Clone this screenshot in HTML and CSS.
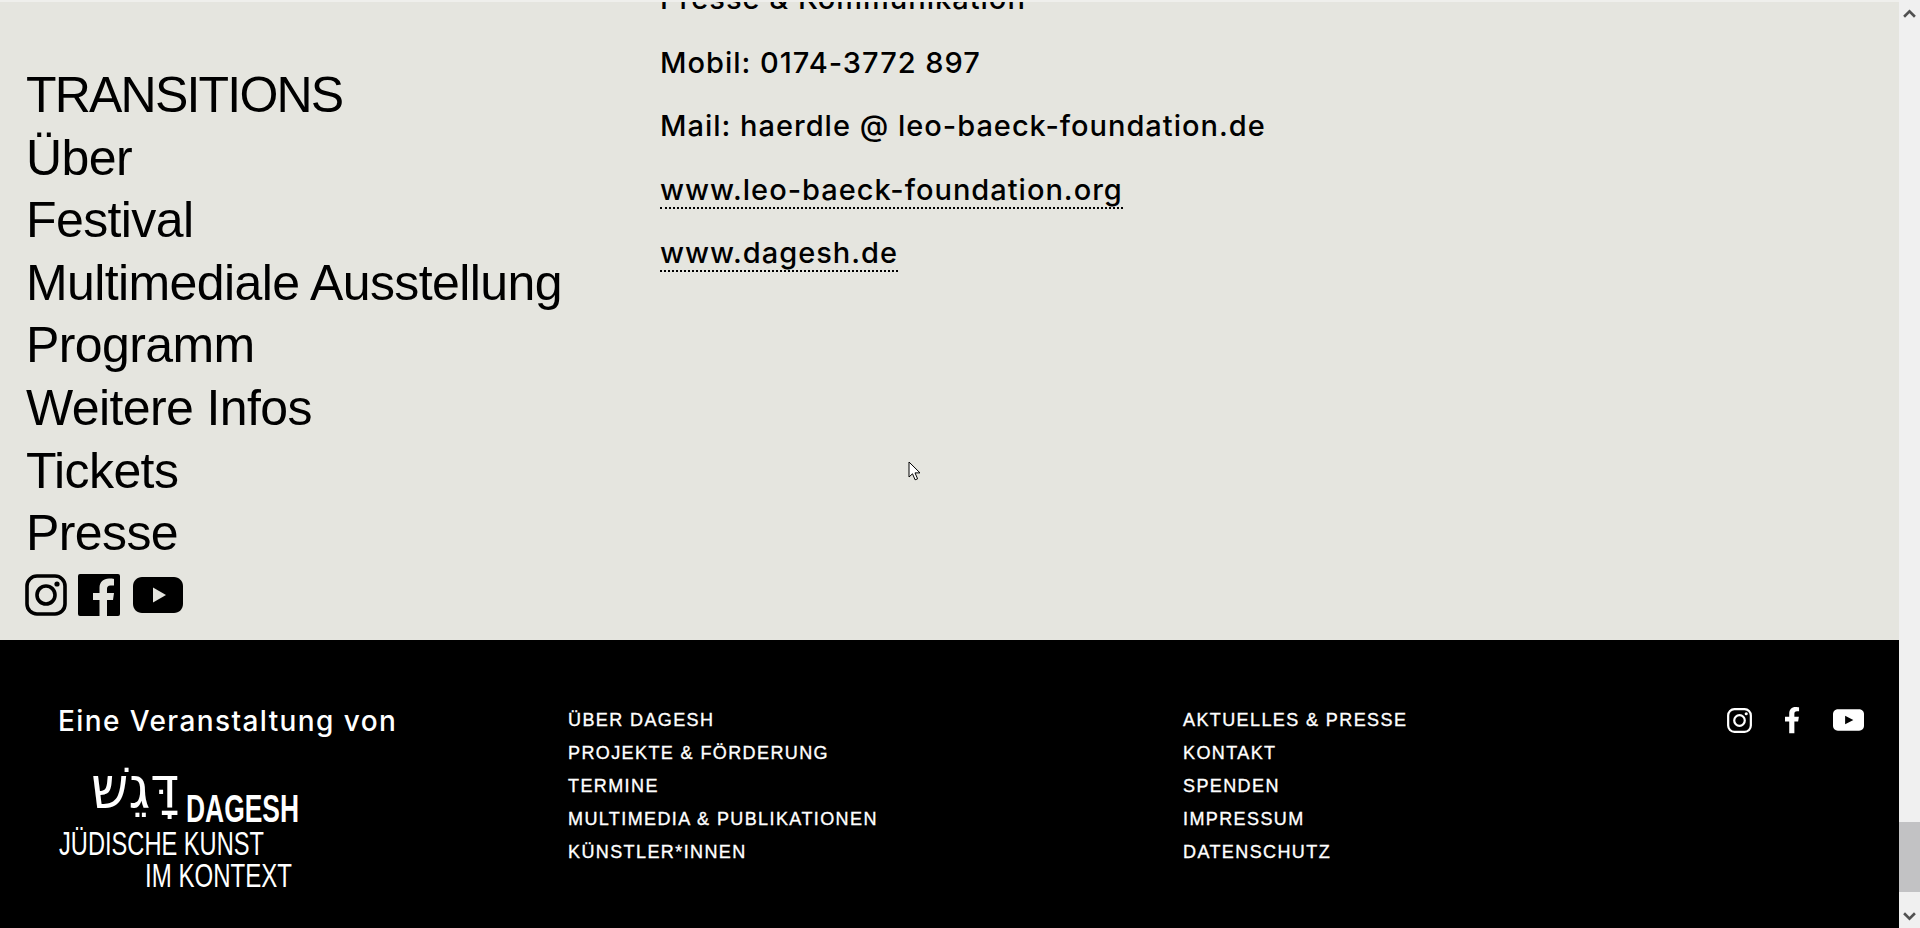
FILE: index.html
```html
<!DOCTYPE html>
<html lang="de">
<head>
    <meta charset="UTF-8">
    <title>TRANSITIONS - Presse</title>
    <link rel="stylesheet" href="styles.css">
</head>
<body>
<div id="page">
    <section class="main">
        <nav class="side">
            <h2>TRANSITIONS</h2>
            <a href="#">Über</a>
            <a href="#">Festival</a>
            <a href="#">Multimediale Ausstellung</a>
            <a href="#">Programm</a>
            <a href="#">Weitere Infos</a>
            <a href="#">Tickets</a>
            <a href="#">Presse</a>
            <div class="side-icons">
                <svg class="ic-insta" viewBox="0 0 42 42"><rect x="2" y="2" width="38" height="38" rx="10" fill="none" stroke="#000" stroke-width="3.6"/><circle cx="21" cy="21" r="9" fill="none" stroke="#000" stroke-width="3.6"/><circle cx="32" cy="10" r="2.6"/></svg>
                <svg class="ic-fb" viewBox="0 0 42 42"><path d="M2 0h38a2 2 0 0 1 2 2v38a2 2 0 0 1-2 2H29V26h6l1-7h-7v-4c0-2 1-3.500 3.500-3.500H36V5c-1-.2-3-.4-5-.4-5.500 0-9.500 3.400-9.500 9.400v5H15v7h6.500v16H2a2 2 0 0 1-2-2V2a2 2 0 0 1 2-2z"/></svg>
                <svg class="ic-yt" viewBox="0 0 50 36"><path d="M9 0h32c5 0 9 4 9 9v18c0 5-4 9-9 9H9c-5 0-9-4-9-9V9c0-5 4-9 9-9z"/><path d="M20 10.500 33 18l-13 7.500z" fill="#e5e5df"/></svg>
            </div>
        </nav>
        <div class="press">
            <p>Presse &amp; Kommunikation</p>
            <p>Mobil: 0174-3772 897</p>
            <p>Mail: haerdle @ leo-baeck-foundation.de</p>
            <p><a href="#">www.leo-baeck-foundation.org</a></p>
            <p><a href="#">www.dagesh.de</a></p>
        </div>
    </section>
    <footer>
        <div class="org">
            <h3>Eine Veranstaltung von</h3>
            <svg class="logo" viewBox="0 0 250 130">
                <text x="32" y="50" class="logo-he" textLength="88" lengthAdjust="spacingAndGlyphs">דָּגֵשׁ</text>
                <text x="127" y="64" class="logo-name" textLength="113" lengthAdjust="spacingAndGlyphs">DAGESH</text>
                <text x="0" y="97" class="logo-line" textLength="205" lengthAdjust="spacingAndGlyphs">JÜDISCHE KUNST</text>
                <text x="86" y="129" class="logo-line" textLength="147" lengthAdjust="spacingAndGlyphs">IM KONTEXT</text>
            </svg>
        </div>
        <ul class="links">
            <li><a href="#">ÜBER DAGESH</a></li>
            <li><a href="#">PROJEKTE &amp; FÖRDERUNG</a></li>
            <li><a href="#">TERMINE</a></li>
            <li><a href="#">MULTIMEDIA &amp; PUBLIKATIONEN</a></li>
            <li><a href="#">KÜNSTLER*INNEN</a></li>
        </ul>
        <ul class="links">
            <li><a href="#">AKTUELLES &amp; PRESSE</a></li>
            <li><a href="#">KONTAKT</a></li>
            <li><a href="#">SPENDEN</a></li>
            <li><a href="#">IMPRESSUM</a></li>
            <li><a href="#">DATENSCHUTZ</a></li>
        </ul>
        <div class="foot-icons">
            <svg class="fi-insta" viewBox="0 0 26 26"><rect x="1.200" y="1.200" width="23.600" height="23.600" rx="6.500" fill="none" stroke="#fff" stroke-width="2.300"/><circle cx="13" cy="13" r="5.500" fill="none" stroke="#fff" stroke-width="2.300"/><circle cx="20" cy="6" r="1.600" fill="#fff"/></svg>
            <svg class="fi-fb" viewBox="0 0 16 28"><path d="M4.500 28V15.500H0V10.500h4.500V7c0-4.500 2.700-7 6.700-7 1.900 0 3.800.3 3.800.3v4.400h-2.200c-2.200 0-2.800 1.300-2.800 2.700v3.100h4.800l-.8 5h-4V28z" fill="#fff"/></svg>
            <svg class="fi-yt" viewBox="0 0 32 22"><path d="M5 0h22c2.800 0 5 2.200 5 5v12c0 2.800-2.200 5-5 5H5c-2.800 0-5-2.200-5-5V5c0-2.800 2.200-5 5-5z" fill="#fff"/><path d="M12.500 6.500 21 11l-8.500 4.500z"/></svg>
        </div>
    </footer>
</div>
<div class="scrollbar">
    <svg class="sb-arrow" viewBox="0 0 12 8"><path d="M1 7 6 2l5 5" fill="none" stroke="#505050" stroke-width="2.400"/></svg>
    <div class="sb-thumb"></div>
    <svg class="sb-arrow" viewBox="0 0 12 8"><path d="M1 1l5 5 5-5" fill="none" stroke="#505050" stroke-width="2.400"/></svg>
</div>
<svg class="cursor" viewBox="0 0 13 21"><path d="M1 1v15l3.500-3.200 2.600 6 2.500-1-2.600-5.900H12z" fill="#fff" stroke="#000" stroke-width="1"/></svg>
</body>
</html>
```

FILE: styles.css
```css
* {
    margin: 0;
    padding: 0;
    list-style: none;
    box-sizing: border-box;
}
html, body {
    height: 928px;
    overflow: hidden;
}
body {
    display: flex;
    background: #000;
    font-family: "Liberation Sans", Arial, sans-serif;
    color: #000;
}
a {
    color: inherit;
    text-decoration: none;
}
#page {
    flex: 1;
    display: flex;
    flex-direction: column;
    min-width: 0;
}

/* oberer teil */
.main {
    height: 640px;
    background: #e5e5df;
    border-top: 2px solid #efefec;
    display: grid;
    grid-template-columns: 660px 1fr;
    overflow: hidden;
}
.side {
    padding: 62px 0 0 26px;
    font-size: 50px;
    line-height: 62.6px;
    letter-spacing: -.6px;
    display: flex;
    flex-direction: column;
    align-items: flex-start;
}
.side h2 {
    font-size: 50px;
    font-weight: 400;
    letter-spacing: -1.8px;
}
.side-icons {
    display: flex;
    align-items: center;
    gap: 11px;
    margin: 9px 0 0 -1px;
}
.ic-insta, .ic-fb {
    width: 42px;
    height: 42px;
}
.ic-yt {
    width: 50px;
    height: 36px;
    margin-left: 2px;
}
.press {
    margin-top: -21px;
    font-family: Inter, "Liberation Sans", sans-serif;
    font-size: 29px;
    font-weight: 500;
    letter-spacing: 1px;
    line-height: 35px;
}
.press p {
    margin-bottom: 28.6px;
}
.press a {
    border-bottom: 2px dotted #000;
}

/* footer */
footer {
    flex: 1;
    background: #000;
    color: #fff;
    display: grid;
    grid-template-columns: 510px 615px 1fr auto;
    padding: 61px 35px 0 58px;
}
.org h3 {
    font-family: Inter, "Liberation Sans", sans-serif;
    font-size: 28px;
    font-weight: 500;
    letter-spacing: 1.4px;
    line-height: 40px;
}
.logo {
    display: block;
    width: 250px;
    height: 130px;
    margin: 17px 0 0 1px;
    fill: #fff;
    overflow: visible;
}
.logo-he {
    font-family: "DejaVu Sans", sans-serif;
    font-size: 58px;
}
.logo-name {
    font-family: "Liberation Sans", sans-serif;
    font-size: 38px;
    font-weight: 700;
}
.logo-line {
    font-family: "Liberation Sans", sans-serif;
    font-size: 34px;
}
.links {
    font-size: 18px;
    letter-spacing: 1.4px;
    -webkit-text-stroke: .35px #fff;
    line-height: 33px;
    padding-top: 3px;
}
.foot-icons {
    display: flex;
    align-items: center;
    gap: 33px;
    height: 28px;
    margin-top: 5px;
}
.fi-insta {
    width: 25px;
    height: 25px;
}
.fi-fb {
    width: 15px;
    height: 28px;
}
.fi-yt {
    width: 31px;
    height: 22px;
}

/* scrollbalken */
.scrollbar {
    width: 21px;
    background: #f0f0f0;
    display: flex;
    flex-direction: column;
    align-items: center;
    padding: 9px 0 7px;
}
.sb-arrow {
    width: 13px;
    height: 9px;
    flex: none;
}
.sb-thumb {
    width: 100%;
    height: 70px;
    background: #c2c2c4;
    margin-top: auto;
    margin-bottom: 20px;
}
.cursor {
    position: absolute;
    left: 908px;
    top: 461px;
    width: 13px;
    height: 21px;
}
```
